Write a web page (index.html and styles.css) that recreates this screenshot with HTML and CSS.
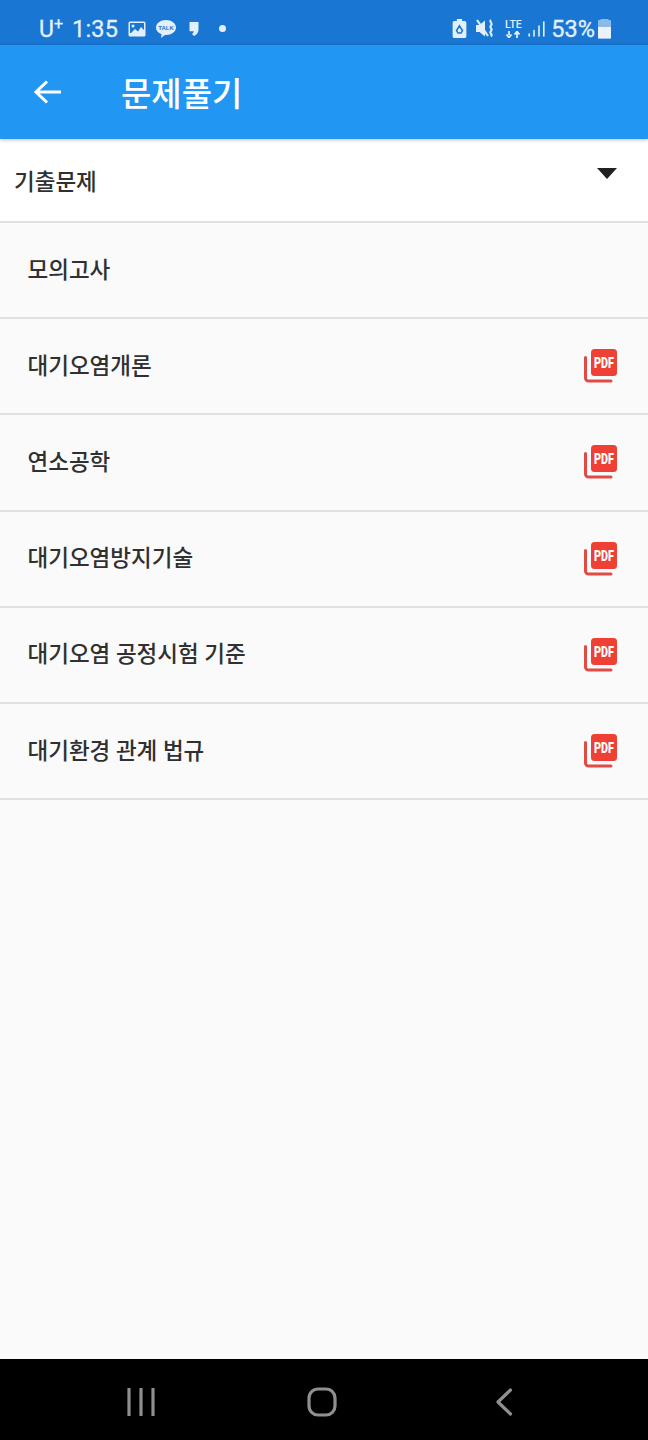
FILE: index.html
```html
<!DOCTYPE html>
<html lang="ko">
<head>
<meta charset="utf-8">
<title>문제풀기</title>
<link rel="stylesheet" href="styles.css">
</head>
<body>
<div class="screen">
  <div class="status">
    <div class="status-left">
      <span class="carrier">U<sup>+</sup></span>
      <span class="time">1:35</span>
      <svg class="ic-img" viewBox="0 0 18 16"><rect x="0.500" y="0.500" width="17" height="15" rx="1.500" fill="#e3f0fb"/><rect x="2" y="2" width="14" height="10" fill="#1976d2"/><circle cx="5" cy="5" r="1.500" fill="#e3f0fb"/><path d="M2 13l5-5 3 2.500 3-4.500 3 3v4z" fill="#e3f0fb"/></svg>
      <svg class="ic-talk" viewBox="0 0 22 20"><path d="M11 1c5.500 0 10 3.300 10 7.500S16.500 16 11 16l-1 .1L6 19l.6-3.800C3 14 1 11.500 1 8.500 1 4.300 5.500 1 11 1z" fill="#e3f0fb"/><text x="11" y="11" class="talk-text">TALK</text></svg>
      <svg class="ic-quote" viewBox="0 0 10 16"><path d="M0.500 1h9v7.500c0 3.200-2 5.500-4.500 6.500L3 13c1-.7 1.700-1.600 1.800-2.800H0.500z" fill="#e3f0fb"/></svg>
      <span class="dot"></span>
    </div>
    <div class="status-right">
      <svg class="ic-saver" viewBox="0 0 14 18"><path d="M4.500 0h5v2H12a1.500 1.500 0 0 1 1.500 1.500v13A1.500 1.500 0 0 1 12 18H2a1.500 1.500 0 0 1-1.500-1.500v-13A1.500 1.500 0 0 1 2 2h2.500z" fill="#e3f0fb"/><path d="M7 6.500l2.800 4.500-1.400 2.300H5.600L4.200 11z" fill="none" stroke="#1976d2" stroke-width="1.500"/></svg>
      <svg class="ic-mute" viewBox="0 0 20 18"><path d="M0 5.500h3.500L9 1v16l-5.500-4.500H0z" fill="#e3f0fb"/><path d="M1 0.500l11 16" stroke="#e3f0fb" stroke-width="2.200" fill="none"/><path d="M15 0.500c-2.500 2 2.500 3 0 5.500s2.500 3 0 5.500 2.500 3 0 5.500" stroke="#e3f0fb" stroke-width="2" fill="none"/></svg>
      <div class="lte">
        <span class="lte-text">LTE</span>
        <svg class="ic-arrows" viewBox="0 0 18 7"><path d="M5 0v4M2.500 3.500L5 6.500l2.500-3M13 7V2M10.500 3.500L13 .5l2.500 3" stroke="#e3f0fb" stroke-width="1.800" fill="none"/></svg>
      </div>
      <svg class="ic-signal" viewBox="0 0 17 16"><path d="M1.200 13v2M6 9.500V15M11 5v10M15.800 1v14" stroke="#e3f0fb" stroke-width="1.600" stroke-linecap="round"/></svg>
      <span class="pct">53%</span>
      <div class="battery"><div class="battery-fill"></div></div>
    </div>
  </div>

  <header class="appbar">
    <svg class="ic-back" viewBox="0 0 28 24"><path d="M27 12H2M13 1.500L2 12l11 10.500" fill="none" stroke="#fff" stroke-width="3"/></svg>
    <h1 class="title">문제풀기</h1>
  </header>

  <div class="select">
    <span class="select-label">기출문제</span>
    <span class="caret"></span>
  </div>

  <ul class="list">
    <li class="row"><span>모의고사</span></li>
    <li class="row"><span>대기오염개론</span><svg class="ic-pdf" viewBox="0 0 36 36"><path d="M2.500 9.500V30a3 3 0 0 0 3 3H28" class="pdf-back"/><rect x="8" y="1" width="26" height="27" rx="3.500" class="pdf-sheet"/><text x="21" y="19.500" class="pdf-text" textLength="20" lengthAdjust="spacingAndGlyphs">PDF</text></svg></li>
    <li class="row"><span>연소공학</span><svg class="ic-pdf" viewBox="0 0 36 36"><path d="M2.500 9.500V30a3 3 0 0 0 3 3H28" class="pdf-back"/><rect x="8" y="1" width="26" height="27" rx="3.500" class="pdf-sheet"/><text x="21" y="19.500" class="pdf-text" textLength="20" lengthAdjust="spacingAndGlyphs">PDF</text></svg></li>
    <li class="row"><span>대기오염방지기술</span><svg class="ic-pdf" viewBox="0 0 36 36"><path d="M2.500 9.500V30a3 3 0 0 0 3 3H28" class="pdf-back"/><rect x="8" y="1" width="26" height="27" rx="3.500" class="pdf-sheet"/><text x="21" y="19.500" class="pdf-text" textLength="20" lengthAdjust="spacingAndGlyphs">PDF</text></svg></li>
    <li class="row"><span>대기오염 공정시험 기준</span><svg class="ic-pdf" viewBox="0 0 36 36"><path d="M2.500 9.500V30a3 3 0 0 0 3 3H28" class="pdf-back"/><rect x="8" y="1" width="26" height="27" rx="3.500" class="pdf-sheet"/><text x="21" y="19.500" class="pdf-text" textLength="20" lengthAdjust="spacingAndGlyphs">PDF</text></svg></li>
    <li class="row"><span>대기환경 관계 법규</span><svg class="ic-pdf" viewBox="0 0 36 36"><path d="M2.500 9.500V30a3 3 0 0 0 3 3H28" class="pdf-back"/><rect x="8" y="1" width="26" height="27" rx="3.500" class="pdf-sheet"/><text x="21" y="19.500" class="pdf-text" textLength="20" lengthAdjust="spacingAndGlyphs">PDF</text></svg></li>
  </ul>

  <nav class="navbar">
    <svg class="ic-recent" viewBox="0 0 28 28"><path d="M2 1v26M14 1v26M26 1v26" stroke="#8f8f8f" stroke-width="3.200" stroke-linecap="round"/></svg>
    <svg class="ic-home" viewBox="0 0 30 30"><rect x="2" y="2" width="26" height="26" rx="9" fill="none" stroke="#8f8f8f" stroke-width="3.200"/></svg>
    <svg class="ic-nav-back" viewBox="0 0 18 28"><path d="M15.500 2L3 14l12.500 12" fill="none" stroke="#8f8f8f" stroke-width="3.200" stroke-linecap="round" stroke-linejoin="round"/></svg>
  </nav>
</div>
</body>
</html>
```

FILE: styles.css
```css
* { box-sizing: border-box; }
html, body { margin: 0; padding: 0; }
body {
  width: 648px;
  height: 1440px;
  overflow: hidden;
  font-family: Roboto, "Noto Sans CJK KR", sans-serif;
  background: #fafafa;
}
.screen { display: flex; flex-direction: column; height: 1440px; }

.status {
  flex: 0 0 45px;
  background: #1976d2;
  color: #e3f0fb;
  display: flex;
  justify-content: space-between;
  align-items: center;
  padding: 12px 37px 0 39px;
}
.status-left, .status-right { display: flex; align-items: center; }
.carrier { font-size: 23px; line-height: 24px; margin-top: 3px; -webkit-text-stroke: 0.3px #e3f0fb; }
.carrier sup { font-size: 16px; line-height: 0; vertical-align: 8px; }
.time { font-size: 23.500px; line-height: 26px; margin-left: 9px; letter-spacing: 0.2px; -webkit-text-stroke: 0.3px #e3f0fb; }
.ic-img { width: 18px; height: 16px; margin-left: 10px; }
.ic-talk { width: 22px; height: 20px; margin-left: 9px; }
.talk-text { font: 700 6px "Liberation Sans", sans-serif; fill: #1976d2; text-anchor: middle; }
.ic-quote { width: 10px; height: 16px; margin-left: 12px; margin-top: 1px; }
.dot { width: 7px; height: 7px; border-radius: 50%; background: #e3f0fb; margin-left: 20px; }

.ic-saver { width: 15px; height: 19px; }
.ic-mute { width: 20px; height: 19px; margin-left: 9px; }
.lte { display: flex; flex-direction: column; align-items: center; margin-left: 8px; width: 18px; }
.lte-text { font-size: 10.500px; line-height: 10px; font-weight: 500; }
.ic-arrows { width: 18px; height: 7px; margin-top: 1px; }
.ic-signal { width: 17px; height: 16px; margin-left: 6px; }
.pct { font-size: 23.500px; line-height: 26px; margin-left: 6px; -webkit-text-stroke: 0.3px #e3f0fb; }
.battery {
  width: 13px;
  height: 20px;
  margin-left: 3px;
  background: #8db9e6;
  border-radius: 2px;
  display: flex;
  align-items: flex-end;
  clip-path: polygon(20% 0, 80% 0, 80% 8%, 100% 8%, 100% 100%, 0 100%, 0 8%, 20% 8%);
}
.battery-fill { width: 100%; height: 57%; background: #eaf3fc; }

.appbar {
  flex: 0 0 94px;
  background: #2196f3;
  display: flex;
  align-items: center;
  box-shadow: 0 1px 4px rgba(0, 0, 0, 0.25);
  padding-left: 34px;
  position: relative;
}
.ic-back { width: 28px; height: 24px; flex: none; }
.title {
  margin: 6px 0 0 59px;
  font-size: 33px;
  font-weight: 500;
  color: #fff;
  line-height: 40px;
}

.select {
  flex: 0 0 84px;
  background: #fff;
  border-bottom: 2px solid #e0e0e0;
  display: flex;
  justify-content: space-between;
  padding: 27px 31px 0 14px;
  color: #303030;
}
.select-label { font-size: 22.500px; font-weight: 500; line-height: 32px; }
.caret {
  width: 0;
  height: 0;
  margin-top: 2px;
  border-left: 10.500px solid transparent;
  border-right: 10.500px solid transparent;
  border-top: 11px solid #212121;
}

.list { list-style: none; margin: 0; padding: 0; flex: 1; }
.row {
  height: 96.200px;
  border-bottom: 2px solid #e0e0e0;
  display: flex;
  align-items: center;
  justify-content: space-between;
  padding: 0 29px 5px 27.500px;
  font-size: 22.500px;
  font-weight: 500;
  color: #303030;
}
.ic-pdf { width: 36px; height: 36px; flex: none; margin-top: 5px; }
.pdf-back { fill: none; stroke: #e04b45; stroke-width: 3; stroke-linecap: round; }
.pdf-sheet { fill: #ee4035; }
.pdf-text { font: 900 14px Roboto, sans-serif; fill: #fff; text-anchor: middle; }

.navbar {
  flex: 0 0 81px;
  background: #000;
  display: flex;
  align-items: center;
  padding: 5px 0 0 127px;
}
.ic-recent { width: 28px; height: 28px; }
.ic-home { width: 30px; height: 30px; margin-left: 152px; }
.ic-nav-back { width: 18px; height: 28px; margin-left: 158px; }
```
